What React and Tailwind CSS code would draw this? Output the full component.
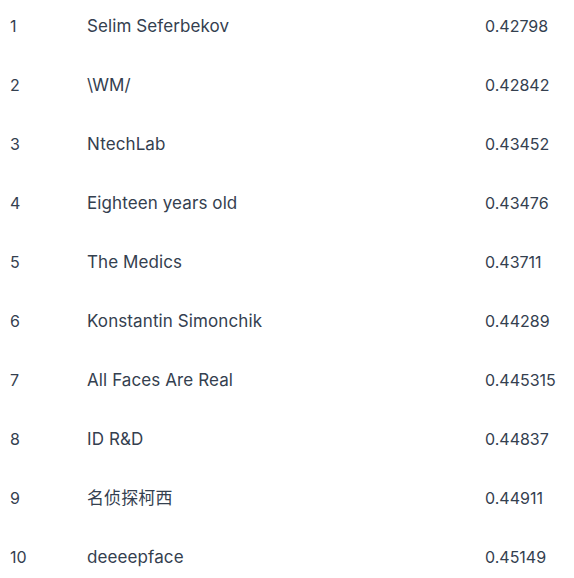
const rows = [
  [1, 'Selim Seferbekov', '0.42798'],
  [2, '\\WM/', '0.42842'],
  [3, 'NtechLab', '0.43452'],
  [4, 'Eighteen years old', '0.43476'],
  [5, 'The Medics', '0.43711'],
  [6, 'Konstantin Simonchik', '0.44289'],
  [7, 'All Faces Are Real', '0.445315'],
  [8, 'ID R&D', '0.44837'],
  [9, '名侦探柯西', '0.44911'],
  [10, 'deeeepface', '0.45149'],
];

export default function App() {
  return (
    <div
      className="w-[574px] h-[578px] overflow-hidden bg-white pt-[14px] text-[16px] text-[#34404f]"
      style={{ fontFamily: 'Inter, "Noto Sans CJK SC", sans-serif' }}
    >
      {rows.map(([rank, name, score]) => (
        <div key={rank} className="grid grid-cols-[77px_398px_1fr] pl-[10px] h-[59px] leading-6">
          <span>{rank}</span>
          <span className="text-[17px] tracking-[0.1px]">{name}</span>
          <span>{score}</span>
        </div>
      ))}
    </div>
  );
}
